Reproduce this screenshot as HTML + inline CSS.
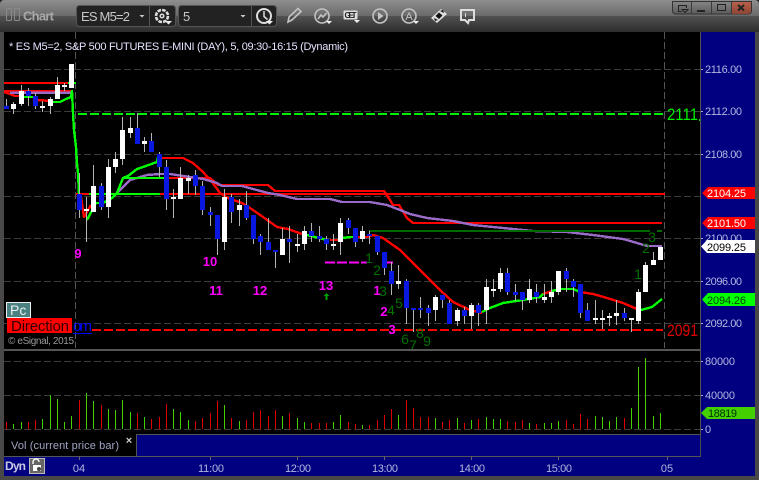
<!DOCTYPE html>
<html>
<head>
<meta charset="utf-8">
<style>
html,body{margin:0;padding:0;background:#000;width:759px;height:480px;overflow:hidden}
svg{display:block;font-family:"Liberation Sans",sans-serif}
</style>
</head>
<body>
<svg width="759" height="480" viewBox="0 0 759 480" xmlns="http://www.w3.org/2000/svg">
<defs>
<linearGradient id="tb" x1="0" y1="0" x2="0" y2="1">
<stop offset="0" stop-color="#8e8e8e"/><stop offset=".5" stop-color="#6a6a6a"/><stop offset=".5" stop-color="#525252"/><stop offset="1" stop-color="#2c2c2c"/>
</linearGradient>
<linearGradient id="wb" x1="0" y1="0" x2="0" y2="1"><stop offset="0" stop-color="#868686"/><stop offset="1" stop-color="#5a5a5a"/></linearGradient>
<linearGradient id="wr" x1="0" y1="0" x2="0" y2="1"><stop offset="0" stop-color="#b5604c"/><stop offset="1" stop-color="#8f4534"/></linearGradient>
</defs>
<rect width="759" height="480" fill="#484848"/>
<rect width="759" height="32" fill="url(#tb)"/>
<path d="M0 0h4a4 4 0 0 0-4 4zM759 0h-4a4 4 0 0 1 4 4z" fill="#222"/>
<rect x="4" y="32" width="696" height="424" fill="#000"/>
<rect x="700" y="32" width="1" height="402" fill="#555"/>
<rect x="701" y="32" width="54" height="444" fill="#000080"/>

<!-- toolbar -->
<g fill="none" stroke="#8a8a8a" stroke-width="1"><rect x="6.5" y="8.5" width="5" height="12" rx="1"/><rect x="14.5" y="8.5" width="5" height="12" rx="1"/></g>
<text x="23" y="20.5" font-size="13" font-weight="bold" fill="#a8a8a8" textLength="31">Chart</text>
<rect x="76.5" y="5.5" width="99" height="21" rx="3" fill="#222" stroke="#555"/>
<rect x="178.5" y="5.5" width="98" height="21" rx="3" fill="#222" stroke="#555"/>
<path d="M149.5 6V26M251.5 6V26" stroke="#555"/>
<text x="81" y="21" font-size="13" fill="#c8c8c8" textLength="49">ES M5=2</text>
<text x="183" y="21" font-size="13" fill="#c8c8c8">5</text>
<path d="M139.5 15h5l-2.5 2.5zM240.5 15h5l-2.5 2.5z" fill="#ccc"/>
<g fill="none" stroke="#ddd" stroke-width="2">
<circle cx="162" cy="16" r="6" stroke-width="2.6" stroke-dasharray="3.6 1.1"/><circle cx="162" cy="16" r="1.8" stroke-width="1.5"/>
<circle cx="264" cy="16" r="7"/><path d="M264 11v5.5l3.5 3" stroke-width="1.5"/>
</g>
<path d="M165 21h7l-3.5 3.5zM266 21h7l-3.5 3.5z" fill="#eee"/>
<g fill="none" stroke="#c4c4c4" stroke-width="1.6">
<path d="M288 22l1-5 9-8.5 3 3-9 8.5z"/>
<circle cx="322" cy="16" r="7"/><path d="M318 19l3-4 2 2 3.5-4"/>
<circle cx="380" cy="16" r="7"/>
<circle cx="409" cy="16" r="7"/>
</g>
<path d="M461 10h13v10h-5l-1 3-3-3h-4z" fill="none" stroke="#ddd" stroke-width="2"/>
<path d="M378 12l5.500 4-5.500 4z" fill="#c4c4c4"/>
<text x="409" y="20" font-size="11" fill="#c4c4c4" text-anchor="middle">A</text>
<path d="M326 21h6l-3 3zM413 21h6l-3 3zM354 20h6l-3 3z" fill="#eee"/>
<rect x="343.500" y="10.500" width="14" height="9" rx="1" fill="#ddd"/>
<text x="350.500" y="18" font-size="8" font-weight="bold" fill="#222" text-anchor="middle" textLength="12">GET</text>
<path d="M431 18l10-9 6 5-10 9z" fill="#ddd"/><path d="M435.500 16l3.500-3.500 3.500 3-3.500 3.500z" fill="#111"/><path d="M440 11l3-1 1 3zM434 18l1 3 3-1z" fill="#111"/>
<path d="M465.500 13v4" stroke="#ddd"/>
<!-- window buttons -->
<path d="M672.500 1.500H751.500V11a3 3 0 0 1-3 3H675.500a3 3 0 0 1-3-3z" fill="url(#wb)" stroke="#333"/>
<path d="M731.500 2H751v9a3 3 0 0 1-3 3H731.500z" fill="url(#wr)"/>
<path d="M691.500 2V14M711.500 2V14M731.500 2V14" stroke="#3a3a3a"/>
<path d="M681.500 11.500h-3V5.500h8V8M682 9.500h6l-3 3z" fill="none" stroke="#222"/>
<path d="M697 10h8v2h-8z" fill="#222"/>
<rect x="717.500" y="4.500" width="8" height="6" fill="none" stroke="#222"/>
<path d="M738 5l6 5.500M744 5l-6 5.500" stroke="#222" stroke-width="2"/>

<!-- grid -->
<g stroke="#3c3c3c" stroke-dasharray="7 3" fill="none" shape-rendering="crispEdges">
<path d="M4 69.500H700M4 111.500H700M4 154.500H700M4 196.500H700M4 238.500H700M4 281.500H700M4 323.500H700"/>
<path d="M4 361.500H700M4 395.500H700M4 429.500H700"/>
</g>
<path d="M75.500 32V348M664.500 32V348" stroke="#555" stroke-dasharray="7 3" fill="none" shape-rendering="crispEdges"/>

<!-- lines -->
<g fill="none" stroke-width="2.4" shape-rendering="crispEdges" stroke-linejoin="round">
<path d="M4 83H76M4 91H72M76 194H90M160 194H665M168 178H210L218 185H268L275 191H384L390 200L393 205H399L407 218L413 223H662" stroke="#f00"/>
<path d="M4 92L10 94L15 96L24 96M34 98L38 100L51 101M81 197L84 217L91 205" stroke="#f00"/>
<path d="M160 158H183L193 163L203 172L212 182L220 193L228 198L242 203L253 210L263 217L277 227L288 229L302 234M330 240H338M358 237H367L373 235L383 238L400 250L420 270L440 290L453 302L470 310L482 313M543 294L552 291M580 292L593 294L607 298L623 303L637 309L641 310" stroke="#f00"/>
<path d="M10 92.700H71M113 197L122 188L130 180L147 175L160 174H170L203 179L217 183L222 186H242L253 189L268 193L280 195L297 199H330L342 202H370L387 205L400 210L410 214L427 218L453 221L473 225L503 228L533 231L567 232L593 235L623 239L637 243L647 246H662" stroke="#9a6cc8"/>
<path d="M68 83H76M24 97H34M51 102H60L66 99L71 97L72 91L73 113L74 130L76 147L77 163L78 173L79 194M89 194H160M87 220L96 203H103L112 198L117 193L123 178L128 176L137 169L143 167L157 162L158 157M123 178H168M302 234L307 235L327 240M338 240L343 238L350 237L358 237M482 312L490 308L503 303L523 300L540 297L543 294M552 291L560 289H573L580 292M641 310L652 307L662 299" stroke="#0f0"/>
<path d="M369 231H650M657 231H662" stroke="#006a00"/>
<path d="M78 114H663" stroke="#00ee00" stroke-dasharray="9 3"/>
<path d="M92 330H663" stroke="#f00" stroke-dasharray="9 3"/>
<path d="M325 262.500h10M337 262.500h10M349 262.500h10M361 262.500h6M387 262.500h6" stroke="#f0f"/>
</g>

<!-- candles -->
<g fill="none" shape-rendering="crispEdges">
<path stroke="#b4b4b4" d="M6.500 99V109M13.500 102V114M21.500 85V106M28.500 88V106M35.500 93V109M42.500 101V112M50.500 97V114M57.500 77V99M64.500 83V91M71.500 64V88M79.500 173V218M86.500 197V242M93.500 165V212M101.500 183V210M108.500 159V218M115.500 152V173M122.500 117V165M130.500 117V138M137.500 113V144M144.500 137V152M151.500 133V152M159.500 152V177M166.500 160V210M173.500 189V218M180.500 167V199M188.500 175V194M195.500 170V195M202.500 181V215M210.500 207V226M217.500 215V255M224.500 189V250M231.500 194V223M239.500 199V226M246.500 191V220M253.500 215V244M260.500 234V255M268.500 218V250M275.500 250V268M282.500 228V255M289.500 226V263M297.500 234V252M304.500 226V250M311.500 223V242M319.500 226V242M326.500 236V250M333.500 234V250M340.500 218V255M348.500 218V234M355.500 228V247M362.500 226V242M369.500 231V244M377.500 236V255M384.500 252V275M391.500 262V295M398.500 265V289M406.500 279V324M413.500 308V332M420.500 297V318M428.500 305V326M435.500 295V321M442.500 295V308M449.500 300V324M457.500 308V326M464.500 307V324M471.500 303V329M478.500 303V326M486.500 279V324M493.500 279V297M500.500 268V292M507.500 268V295M515.500 284V301M522.500 292V310M529.500 279V303M536.500 284V303M544.500 284V303M551.500 281V303M558.500 271V295M566.500 268V292M573.500 279V297M580.500 284V318M587.500 303V321M595.500 300V324M602.500 310V329M609.500 313V326M616.500 300V325M624.500 308V321M631.500 318V332M638.500 289V324M645.500 262V292M653.500 252V265M660.500 247V260"/>
<path stroke="#fff" stroke-width="5" d="M13.500 104V109M21.500 91V104M42.500 106V108M50.500 99V106M57.500 85V99M64.500 85V87M71.500 64V88M86.500 209V211M93.500 186V212M108.500 167V207M115.500 159V167M122.500 130V159M130.500 128V133M144.500 141V144M173.500 197V199M180.500 178V199M188.500 178V181M224.500 197V242M239.500 205V210M282.500 239V255M297.500 244V246M304.500 231V244M333.500 244V246M340.500 223V242M362.500 231V239M398.500 281V284M435.500 297V310M457.500 310V321M471.500 305V316M486.500 287V310M493.500 289V291M500.500 273V289M529.500 289V300M544.500 297V300M551.500 292V297M558.500 271V292M595.500 318V320M602.500 318V320M609.500 316V318M616.500 313V316M631.500 318V320M638.500 292V321M645.500 265V292M653.500 260V265M660.500 247V260"/>
<path stroke="#0818e0" stroke-width="5" d="M6.500 106V109M28.500 91V96M35.500 96V106M79.500 194V210M101.500 186V207M137.500 128V144M151.500 141V152M159.500 154V167M166.500 167V199M195.500 175V186M202.500 186V210M210.500 212V215M217.500 215V239M231.500 197V212M246.500 205V218M253.500 215V239M260.500 236V242M268.500 242V250M275.500 250V252M289.500 239V242M311.500 231V236M319.500 236V239M326.500 239V244M348.500 220V228M355.500 228V242M369.500 234V236M377.500 236V252M384.500 252V268M391.500 271V284M406.500 281V308M413.500 308V310M420.500 308V310M428.500 308V313M442.500 295V300M449.500 303V324M464.500 310V316M478.500 305V313M507.500 273V292M515.500 292V295M522.500 292V300M536.500 292V297M566.500 271V279M573.500 281V287M580.500 284V313M587.500 310V321M624.500 313V318"/>
</g>

<!-- volume -->
<g fill="none" shape-rendering="crispEdges">
<path stroke="#44d000" d="M13.500 429V424M21.500 429V422M42.500 429V419M50.500 429V395M57.500 429V399M64.500 429V422M71.500 429V416M86.500 429V393M93.500 429V401M108.500 429V409M115.500 429V410M122.500 429V400M130.500 429V412M144.500 429V417M173.500 429V409M180.500 429V412M188.500 429V420M224.500 429V405M239.500 429V421M282.500 429V416M297.500 429V418M304.500 429V422M333.500 429V422M340.500 429V415M362.500 429V425M398.500 429V415M435.500 429V418M457.500 429V418M471.500 429V420M486.500 429V417M493.500 429V419M500.500 429V419M529.500 429V423M544.500 429V423M551.500 429V423M558.500 429V421M595.500 429V416M602.500 429V417M609.500 429V421M616.500 429V417M631.500 429V408M638.500 429V367M645.500 429V358M653.500 429V416M660.500 429V413"/>
<path stroke="#dc0000" d="M6.500 429V422M28.500 429V422M35.500 429V420M79.500 429V400M101.500 429V405M137.500 429V413M151.500 429V419M159.500 429V417M166.500 429V404M195.500 429V421M202.500 429V418M210.500 429V413M217.500 429V401M231.500 429V418M246.500 429V420M253.500 429V412M260.500 429V410M268.500 429V416M275.500 429V410M289.500 429V413M311.500 429V423M319.500 429V423M326.500 429V423M348.500 429V422M355.500 429V424M369.500 429V425M377.500 429V420M384.500 429V415M391.500 429V409M406.500 429V400M413.500 429V408M420.500 429V417M428.500 429V417M442.500 429V422M449.500 429V420M464.500 429V423M478.500 429V419M507.500 429V421M515.500 429V422M522.500 429V420M536.500 429V424M566.500 429V420M573.500 429V424M580.500 429V414M587.500 429V419M624.500 429V418"/>
</g>

<!-- chart text -->
<text x="9" y="50" font-size="11" fill="#e4e4ff" textLength="339">* ES M5=2, S&amp;P 500 FUTURES E-MINI (DAY), 5, 09:30-16:15 (Dynamic)</text>
<text x="667" y="120" font-size="17" fill="#00f000" textLength="31" lengthAdjust="spacingAndGlyphs">2111</text>
<rect x="699" y="119" width="1" height="2" fill="#00f000"/>
<text x="667" y="336" font-size="17" fill="#e00000" textLength="31" lengthAdjust="spacingAndGlyphs">2091</text>
<g font-size="13" fill="#f0f" font-weight="bold" text-anchor="middle">
<text x="78" y="258">9</text><text x="210" y="266">10</text><text x="216" y="295">11</text><text x="260" y="295">12</text><text x="326" y="290">13</text><text x="377" y="295">1</text><text x="384" y="316">2</text><text x="392" y="334">3</text>
</g>
<g font-size="14" fill="#007000" text-anchor="middle">
<text x="369" y="263">1</text><text x="377" y="275">2</text><text x="383" y="296">3</text><text x="391" y="315">4</text><text x="399" y="308">5</text><text x="405" y="344">6</text><text x="413" y="350">7</text><text x="420" y="338">8</text><text x="427" y="346">9</text>
<text x="638" y="279">1</text><text x="646" y="253">2</text><text x="652" y="242">3</text>
</g>
<path d="M326.500 293l3 3h-2v4h-2v-4h-2z" fill="#00a000"/>
<rect x="6.500" y="302.500" width="24" height="15" fill="#4a8284" stroke="#eee"/>
<text x="10" y="315" font-size="14" fill="#eee">Pc</text>
<rect x="7" y="318" width="65" height="15" fill="#f00"/>
<text x="11" y="331" font-size="15" fill="#300" textLength="58">Direction</text>
<text x="73" y="331" font-size="15" fill="#00f" textLength="19">om</text>
<rect x="73" y="333" width="19" height="1" fill="#00f"/>
<text x="8" y="344" font-size="10" fill="#999" textLength="66">© eSignal, 2015</text>

<!-- volume pane furniture -->
<rect x="4" y="349" width="696" height="2" fill="#555"/>
<rect x="136" y="434" width="564" height="23" fill="#000080"/>
<path d="M136 434.500H701M136.500 434V457" stroke="#555" shape-rendering="crispEdges"/>
<text x="11" y="449" font-size="11" fill="#a0a4c4" textLength="108">Vol (current price bar)</text>
<text x="129" y="444" font-size="11" font-weight="bold" fill="#ccc" text-anchor="middle">×</text>
<rect x="4" y="457" width="751" height="19" fill="#000080"/>
<rect x="4" y="456" width="697" height="1" fill="#555"/>
<path d="M79.500 457v3M210.500 457v3M297.500 457v3M384.500 457v3M471.500 457v3M558.500 457v3M667.500 457v3" stroke="#667" shape-rendering="crispEdges"/>
<text x="5" y="470" font-size="12" font-weight="bold" fill="#c8c8e4" textLength="21">Dyn</text>
<rect x="29.500" y="458.500" width="15" height="15" fill="#666" stroke="#bbb"/>
<path d="M33 464v-2a3 3 0 0 1 6 0" fill="none" stroke="#fff" stroke-width="1.400"/>
<rect x="33" y="465" width="8" height="6" fill="#fff"/><circle cx="39" cy="469" r="2" fill="#444"/>
<g font-size="11" fill="#b4b8e0" text-anchor="middle">
<text x="79" y="472">04</text><text x="211" y="472" textLength="26">11:00</text><text x="298" y="472" textLength="26">12:00</text><text x="385" y="472" textLength="26">13:00</text><text x="472" y="472" textLength="26">14:00</text><text x="559" y="472" textLength="26">15:00</text><text x="667" y="472">05</text>
</g>

<!-- price axis -->
<path d="M701 69.500h2M701 111.500h2M701 154.500h2M701 238.500h2M701 281.500h2M701 323.500h2M701 361.500h2M701 395.500h2M701 429.500h2" stroke="#aab" shape-rendering="crispEdges"/>
<g font-size="11" fill="#b4b8e0">
<text x="705" y="73" textLength="37">2116.00</text><text x="705" y="115" textLength="37">2112.00</text><text x="705" y="158" textLength="37">2108.00</text><text x="705" y="242" textLength="37">2100.00</text><text x="705" y="285" textLength="37">2096.00</text><text x="705" y="327" textLength="37">2092.00</text>
<text x="705" y="365" textLength="30">80000</text><text x="705" y="399" textLength="30">40000</text><text x="705" y="433">0</text>
</g>
<path d="M702 193l6-6h47v12h-47z" fill="#f00"/>
<path d="M702 223l6-6h47v12h-47z" fill="#f00"/>
<path d="M701 246.500l6-6.500h48v13h-48z" fill="#fff"/>
<path d="M702 299.500l6-6.500h47v13h-47z" fill="#0f0"/>
<path d="M701 413l6-6h48v12h-48z" fill="#44d000"/>
<g font-size="11">
<text x="707" y="197" fill="#fff" textLength="39">2104.25</text>
<text x="707" y="227" fill="#fff" textLength="39">2101.50</text>
<text x="707" y="251" fill="#000" textLength="39">2099.25</text>
<text x="707" y="304" fill="#040" textLength="39">2094.26</text>
<text x="708" y="417" fill="#030" textLength="29">18819</text>
</g>
</svg>
</body>
</html>
